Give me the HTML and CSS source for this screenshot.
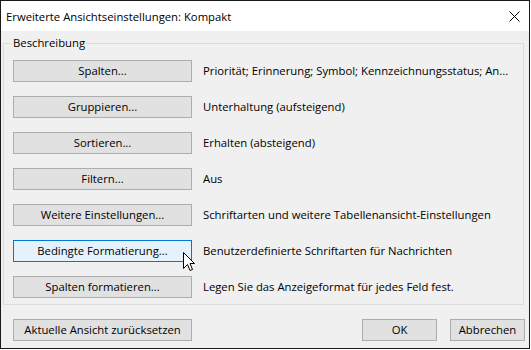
FILE: index.html
```html
<!DOCTYPE html>
<html lang="de">
<head>
<meta charset="utf-8">
<title>Erweiterte Ansichtseinstellungen: Kompakt</title>
<link rel="stylesheet" href="styles.css">
</head>
<body>
<div class="window">
  <div class="titlebar">
    <span class="title">Erweiterte Ansichtseinstellungen: Kompakt</span>
    <svg class="close" width="11" height="11" viewBox="0 0 11 11"><path d="M0.5 0.5 L10.5 10.5 M10.5 0.5 L0.5 10.5" stroke="#000" stroke-width="1" fill="none"/></svg>
  </div>
  <div class="content">
    <div class="group">
      <span class="legend">Beschreibung</span>
      <div class="row"><button class="btn">Spalten...</button><span class="desc">Priorität; Erinnerung; Symbol; Kennzeichnungsstatus; An...</span></div>
      <div class="row"><button class="btn">Gruppieren...</button><span class="desc">Unterhaltung (aufsteigend)</span></div>
      <div class="row"><button class="btn">Sortieren...</button><span class="desc">Erhalten (absteigend)</span></div>
      <div class="row"><button class="btn">Filtern...</button><span class="desc">Aus</span></div>
      <div class="row"><button class="btn">Weitere Einstellungen...</button><span class="desc">Schriftarten und weitere Tabellenansicht-Einstellungen</span></div>
      <div class="row"><button class="btn hot">Bedingte Formatierung...</button><span class="desc">Benutzerdefinierte Schriftarten für Nachrichten</span></div>
      <div class="row"><button class="btn">Spalten formatieren...</button><span class="desc">Legen Sie das Anzeigeformat für jedes Feld fest.</span></div>
    </div>
    <div class="footer">
      <button class="btn">Aktuelle Ansicht zurücksetzen</button>
      <span class="spacer"></span>
      <button class="btn small">OK</button>
      <button class="btn small">Abbrechen</button>
    </div>
  </div>
  <svg class="cursor" width="13" height="20" viewBox="0 0 13 20"><path d="M0.5 0.5 L0.5 16.5 L4.5 12.5 L7 18.5 L9.5 17.5 L7 11.5 L11.5 11.5 Z" fill="#fff" stroke="#000" stroke-width="1" stroke-linejoin="miter"/></svg>
</div>
</body>
</html>
```
FILE: styles.css
```css
* { box-sizing: border-box; }
html, body { margin: 0; padding: 0; background: #ffffff; }
body { font-family: "Open Sans", "Noto Sans", sans-serif; font-size: 11.3px; color: #000; }
.window {
  position: relative;
  width: 530px;
  height: 349px;
  border: 1px solid #1a1a1a;
  background: #f0f0f0;
  display: flex;
  flex-direction: column;
}
.titlebar {
  height: 30px;
  background: #fff;
  display: flex;
  align-items: center;
  padding-left: 5px;
  flex: none;
}
.title { flex: 1; font-size: 11.3px; line-height: 16px; padding-top: 1px; }
.close { margin-right: 9px; margin-top: 1px; }
.content { flex: 1; display: flex; flex-direction: column; }
.group {
  position: relative;
  margin: 12px 5px 0 2px;
  border: 1px solid #dcdcdc;
  padding: 16px 0 6px 9px;
  display: flex;
  flex-direction: column;
  gap: 14px;
}
.legend {
  position: absolute;
  left: 8px;
  top: -9px;
  padding: 0 1px;
  background: #f0f0f0;
  font-size: 11.3px;
  line-height: 16px;
}
.row { display: flex; align-items: center; gap: 11px; height: 22px; }
.btn {
  font-family: inherit;
  font-size: 11.3px;
  color: #000;
  width: 179px;
  height: 22px;
  background: #e1e1e1;
  border: 1px solid #adadad;
  border-radius: 0;
  padding: 0 0 1px;
  margin: 0;
  line-height: 18px;
  flex: none;
}
.btn.hot { background: #e5f1fb; border-color: #0078d7; }
.desc { white-space: nowrap; line-height: 16px; }
.footer {
  display: flex;
  align-items: center;
  margin-top: 14px;
  padding: 0 4px 0 12px;
  gap: 13px;
}
.spacer { flex: 1; }
.btn.small { width: 75px; }
.cursor { position: absolute; left: 182px; top: 251px; }
```
